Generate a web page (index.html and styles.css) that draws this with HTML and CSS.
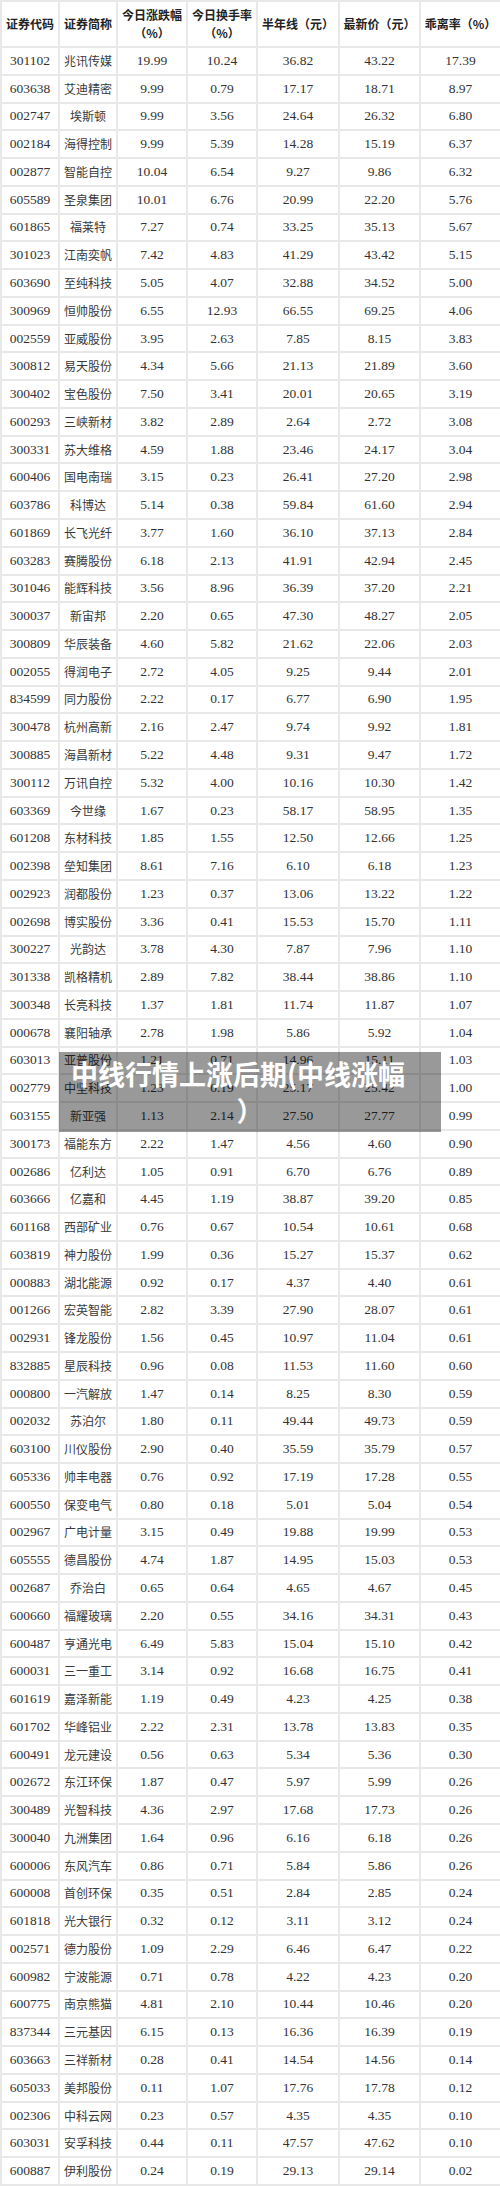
FILE: index.html
```html
<!DOCTYPE html>
<html lang="zh-CN">
<head>
<meta charset="utf-8">
<title>中线行情上涨后期</title>
<link rel="stylesheet" href="styles.css">
</head>
<body>
<div class="page">
<table class="stocks">
<colgroup>
<col class="c-code"><col class="c-name"><col class="c-chg"><col class="c-turn"><col class="c-ma"><col class="c-price"><col class="c-dev">
</colgroup>
<thead>
<tr>
<th>证券代码</th><th>证券简称</th><th>今日涨跌幅<br>（%）</th><th>今日换手率<br>（%）</th><th>半年线（元）</th><th>最新价（元）</th><th>乖离率（%）</th>
</tr>
</thead>
<tbody>
<tr><td>301102</td><td class="nm">兆讯传媒</td><td>19.99</td><td>10.24</td><td>36.82</td><td>43.22</td><td>17.39</td></tr>
<tr><td>603638</td><td class="nm">艾迪精密</td><td>9.99</td><td>0.79</td><td>17.17</td><td>18.71</td><td>8.97</td></tr>
<tr><td>002747</td><td class="nm">埃斯顿</td><td>9.99</td><td>3.56</td><td>24.64</td><td>26.32</td><td>6.80</td></tr>
<tr><td>002184</td><td class="nm">海得控制</td><td>9.99</td><td>5.39</td><td>14.28</td><td>15.19</td><td>6.37</td></tr>
<tr><td>002877</td><td class="nm">智能自控</td><td>10.04</td><td>6.54</td><td>9.27</td><td>9.86</td><td>6.32</td></tr>
<tr><td>605589</td><td class="nm">圣泉集团</td><td>10.01</td><td>6.76</td><td>20.99</td><td>22.20</td><td>5.76</td></tr>
<tr><td>601865</td><td class="nm">福莱特</td><td>7.27</td><td>0.74</td><td>33.25</td><td>35.13</td><td>5.67</td></tr>
<tr><td>301023</td><td class="nm">江南奕帆</td><td>7.42</td><td>4.83</td><td>41.29</td><td>43.42</td><td>5.15</td></tr>
<tr><td>603690</td><td class="nm">至纯科技</td><td>5.05</td><td>4.07</td><td>32.88</td><td>34.52</td><td>5.00</td></tr>
<tr><td>300969</td><td class="nm">恒帅股份</td><td>6.55</td><td>12.93</td><td>66.55</td><td>69.25</td><td>4.06</td></tr>
<tr><td>002559</td><td class="nm">亚威股份</td><td>3.95</td><td>2.63</td><td>7.85</td><td>8.15</td><td>3.83</td></tr>
<tr><td>300812</td><td class="nm">易天股份</td><td>4.34</td><td>5.66</td><td>21.13</td><td>21.89</td><td>3.60</td></tr>
<tr><td>300402</td><td class="nm">宝色股份</td><td>7.50</td><td>3.41</td><td>20.01</td><td>20.65</td><td>3.19</td></tr>
<tr><td>600293</td><td class="nm">三峡新材</td><td>3.82</td><td>2.89</td><td>2.64</td><td>2.72</td><td>3.08</td></tr>
<tr><td>300331</td><td class="nm">苏大维格</td><td>4.59</td><td>1.88</td><td>23.46</td><td>24.17</td><td>3.04</td></tr>
<tr><td>600406</td><td class="nm">国电南瑞</td><td>3.15</td><td>0.23</td><td>26.41</td><td>27.20</td><td>2.98</td></tr>
<tr><td>603786</td><td class="nm">科博达</td><td>5.14</td><td>0.38</td><td>59.84</td><td>61.60</td><td>2.94</td></tr>
<tr><td>601869</td><td class="nm">长飞光纤</td><td>3.77</td><td>1.60</td><td>36.10</td><td>37.13</td><td>2.84</td></tr>
<tr><td>603283</td><td class="nm">赛腾股份</td><td>6.18</td><td>2.13</td><td>41.91</td><td>42.94</td><td>2.45</td></tr>
<tr><td>301046</td><td class="nm">能辉科技</td><td>3.56</td><td>8.96</td><td>36.39</td><td>37.20</td><td>2.21</td></tr>
<tr><td>300037</td><td class="nm">新宙邦</td><td>2.20</td><td>0.65</td><td>47.30</td><td>48.27</td><td>2.05</td></tr>
<tr><td>300809</td><td class="nm">华辰装备</td><td>4.60</td><td>5.82</td><td>21.62</td><td>22.06</td><td>2.03</td></tr>
<tr><td>002055</td><td class="nm">得润电子</td><td>2.72</td><td>4.05</td><td>9.25</td><td>9.44</td><td>2.01</td></tr>
<tr><td>834599</td><td class="nm">同力股份</td><td>2.22</td><td>0.17</td><td>6.77</td><td>6.90</td><td>1.95</td></tr>
<tr><td>300478</td><td class="nm">杭州高新</td><td>2.16</td><td>2.47</td><td>9.74</td><td>9.92</td><td>1.81</td></tr>
<tr><td>300885</td><td class="nm">海昌新材</td><td>5.22</td><td>4.48</td><td>9.31</td><td>9.47</td><td>1.72</td></tr>
<tr><td>300112</td><td class="nm">万讯自控</td><td>5.32</td><td>4.00</td><td>10.16</td><td>10.30</td><td>1.42</td></tr>
<tr><td>603369</td><td class="nm">今世缘</td><td>1.67</td><td>0.23</td><td>58.17</td><td>58.95</td><td>1.35</td></tr>
<tr><td>601208</td><td class="nm">东材科技</td><td>1.85</td><td>1.55</td><td>12.50</td><td>12.66</td><td>1.25</td></tr>
<tr><td>002398</td><td class="nm">垒知集团</td><td>8.61</td><td>7.16</td><td>6.10</td><td>6.18</td><td>1.23</td></tr>
<tr><td>002923</td><td class="nm">润都股份</td><td>1.23</td><td>0.37</td><td>13.06</td><td>13.22</td><td>1.22</td></tr>
<tr><td>002698</td><td class="nm">博实股份</td><td>3.36</td><td>0.41</td><td>15.53</td><td>15.70</td><td>1.11</td></tr>
<tr><td>300227</td><td class="nm">光韵达</td><td>3.78</td><td>4.30</td><td>7.87</td><td>7.96</td><td>1.10</td></tr>
<tr><td>301338</td><td class="nm">凯格精机</td><td>2.89</td><td>7.82</td><td>38.44</td><td>38.86</td><td>1.10</td></tr>
<tr><td>300348</td><td class="nm">长亮科技</td><td>1.37</td><td>1.81</td><td>11.74</td><td>11.87</td><td>1.07</td></tr>
<tr><td>000678</td><td class="nm">襄阳轴承</td><td>2.78</td><td>1.98</td><td>5.86</td><td>5.92</td><td>1.04</td></tr>
<tr><td>603013</td><td class="nm">亚普股份</td><td>1.21</td><td>0.71</td><td>14.96</td><td>15.11</td><td>1.03</td></tr>
<tr><td>002779</td><td class="nm">中坚科技</td><td>1.23</td><td>0.19</td><td>25.17</td><td>25.42</td><td>1.00</td></tr>
<tr><td>603155</td><td class="nm">新亚强</td><td>1.13</td><td>2.14</td><td>27.50</td><td>27.77</td><td>0.99</td></tr>
<tr><td>300173</td><td class="nm">福能东方</td><td>2.22</td><td>1.47</td><td>4.56</td><td>4.60</td><td>0.90</td></tr>
<tr><td>002686</td><td class="nm">亿利达</td><td>1.05</td><td>0.91</td><td>6.70</td><td>6.76</td><td>0.89</td></tr>
<tr><td>603666</td><td class="nm">亿嘉和</td><td>4.45</td><td>1.19</td><td>38.87</td><td>39.20</td><td>0.85</td></tr>
<tr><td>601168</td><td class="nm">西部矿业</td><td>0.76</td><td>0.67</td><td>10.54</td><td>10.61</td><td>0.68</td></tr>
<tr><td>603819</td><td class="nm">神力股份</td><td>1.99</td><td>0.36</td><td>15.27</td><td>15.37</td><td>0.62</td></tr>
<tr><td>000883</td><td class="nm">湖北能源</td><td>0.92</td><td>0.17</td><td>4.37</td><td>4.40</td><td>0.61</td></tr>
<tr><td>001266</td><td class="nm">宏英智能</td><td>2.82</td><td>3.39</td><td>27.90</td><td>28.07</td><td>0.61</td></tr>
<tr><td>002931</td><td class="nm">锋龙股份</td><td>1.56</td><td>0.45</td><td>10.97</td><td>11.04</td><td>0.61</td></tr>
<tr><td>832885</td><td class="nm">星辰科技</td><td>0.96</td><td>0.08</td><td>11.53</td><td>11.60</td><td>0.60</td></tr>
<tr><td>000800</td><td class="nm">一汽解放</td><td>1.47</td><td>0.14</td><td>8.25</td><td>8.30</td><td>0.59</td></tr>
<tr><td>002032</td><td class="nm">苏泊尔</td><td>1.80</td><td>0.11</td><td>49.44</td><td>49.73</td><td>0.59</td></tr>
<tr><td>603100</td><td class="nm">川仪股份</td><td>2.90</td><td>0.40</td><td>35.59</td><td>35.79</td><td>0.57</td></tr>
<tr><td>605336</td><td class="nm">帅丰电器</td><td>0.76</td><td>0.92</td><td>17.19</td><td>17.28</td><td>0.55</td></tr>
<tr><td>600550</td><td class="nm">保变电气</td><td>0.80</td><td>0.18</td><td>5.01</td><td>5.04</td><td>0.54</td></tr>
<tr><td>002967</td><td class="nm">广电计量</td><td>3.15</td><td>0.49</td><td>19.88</td><td>19.99</td><td>0.53</td></tr>
<tr><td>605555</td><td class="nm">德昌股份</td><td>4.74</td><td>1.87</td><td>14.95</td><td>15.03</td><td>0.53</td></tr>
<tr><td>002687</td><td class="nm">乔治白</td><td>0.65</td><td>0.64</td><td>4.65</td><td>4.67</td><td>0.45</td></tr>
<tr><td>600660</td><td class="nm">福耀玻璃</td><td>2.20</td><td>0.55</td><td>34.16</td><td>34.31</td><td>0.43</td></tr>
<tr><td>600487</td><td class="nm">亨通光电</td><td>6.49</td><td>5.83</td><td>15.04</td><td>15.10</td><td>0.42</td></tr>
<tr><td>600031</td><td class="nm">三一重工</td><td>3.14</td><td>0.92</td><td>16.68</td><td>16.75</td><td>0.41</td></tr>
<tr><td>601619</td><td class="nm">嘉泽新能</td><td>1.19</td><td>0.49</td><td>4.23</td><td>4.25</td><td>0.38</td></tr>
<tr><td>601702</td><td class="nm">华峰铝业</td><td>2.22</td><td>2.31</td><td>13.78</td><td>13.83</td><td>0.35</td></tr>
<tr><td>600491</td><td class="nm">龙元建设</td><td>0.56</td><td>0.63</td><td>5.34</td><td>5.36</td><td>0.30</td></tr>
<tr><td>002672</td><td class="nm">东江环保</td><td>1.87</td><td>0.47</td><td>5.97</td><td>5.99</td><td>0.26</td></tr>
<tr><td>300489</td><td class="nm">光智科技</td><td>4.36</td><td>2.97</td><td>17.68</td><td>17.73</td><td>0.26</td></tr>
<tr><td>300040</td><td class="nm">九洲集团</td><td>1.64</td><td>0.96</td><td>6.16</td><td>6.18</td><td>0.26</td></tr>
<tr><td>600006</td><td class="nm">东风汽车</td><td>0.86</td><td>0.71</td><td>5.84</td><td>5.86</td><td>0.26</td></tr>
<tr><td>600008</td><td class="nm">首创环保</td><td>0.35</td><td>0.51</td><td>2.84</td><td>2.85</td><td>0.24</td></tr>
<tr><td>601818</td><td class="nm">光大银行</td><td>0.32</td><td>0.12</td><td>3.11</td><td>3.12</td><td>0.24</td></tr>
<tr><td>002571</td><td class="nm">德力股份</td><td>1.09</td><td>2.29</td><td>6.46</td><td>6.47</td><td>0.22</td></tr>
<tr><td>600982</td><td class="nm">宁波能源</td><td>0.71</td><td>0.78</td><td>4.22</td><td>4.23</td><td>0.20</td></tr>
<tr><td>600775</td><td class="nm">南京熊猫</td><td>4.81</td><td>2.10</td><td>10.44</td><td>10.46</td><td>0.20</td></tr>
<tr><td>837344</td><td class="nm">三元基因</td><td>6.15</td><td>0.13</td><td>16.36</td><td>16.39</td><td>0.19</td></tr>
<tr><td>603663</td><td class="nm">三祥新材</td><td>0.28</td><td>0.41</td><td>14.54</td><td>14.56</td><td>0.14</td></tr>
<tr><td>605033</td><td class="nm">美邦股份</td><td>0.11</td><td>1.07</td><td>17.76</td><td>17.78</td><td>0.12</td></tr>
<tr><td>002306</td><td class="nm">中科云网</td><td>0.23</td><td>0.57</td><td>4.35</td><td>4.35</td><td>0.10</td></tr>
<tr><td>603031</td><td class="nm">安孚科技</td><td>0.44</td><td>0.11</td><td>47.57</td><td>47.62</td><td>0.10</td></tr>
<tr><td>600887</td><td class="nm">伊利股份</td><td>0.24</td><td>0.19</td><td>29.13</td><td>29.14</td><td>0.02</td></tr>
</tbody>
</table>
<div class="overlay-title"><span class="line1">中线行情上涨后期(中线涨幅</span><span class="line2">）</span></div>
</div>
</body>
</html>
```

FILE: styles.css
```css
html, body {
  margin: 0;
  padding: 0;
  background: #ffffff;
}

.page {
  position: relative;
  width: 500px;
}

.stocks {
  width: 500px;
  table-layout: fixed;
  border-collapse: collapse;
  font-family: "Liberation Serif", "Noto Sans CJK SC", serif;
  font-size: 13.5px;
  color: #333333;
}

.c-code { width: 58px; }
.c-name { width: 58px; }
.c-chg { width: 70px; }
.c-turn { width: 70px; }
.c-ma { width: 82px; }
.c-price { width: 81px; }
.c-dev { width: 81px; }

.stocks th,
.stocks td {
  border: 2px solid #e8e8e8;
  padding: 0;
  text-align: center;
  vertical-align: middle;
  white-space: nowrap;
  overflow: hidden;
}

.stocks thead tr {
  height: 46px;
}

.stocks th {
  font-family: "Noto Sans CJK SC", "Liberation Serif", sans-serif;
  font-size: 12px;
  font-weight: 700;
  line-height: 18px;
  color: #222222;
}

.stocks tbody tr {
  height: 27.77px;
}

.stocks td {
  line-height: 16px;
}

.stocks td.nm {
  font-family: "Noto Sans CJK SC", sans-serif;
  font-size: 12px;
  color: #3a3a3a;
}

.overlay-title {
  position: absolute;
  left: 59px;
  top: 1052px;
  width: 382px;
  height: 80px;
  box-sizing: border-box;
  padding-top: 4px;
  background: rgba(0, 0, 0, 0.4);
  color: #ffffff;
  font-family: "Noto Sans CJK SC", sans-serif;
  font-size: 27px;
  font-weight: 700;
  line-height: 36px;
  text-align: center;
}

.overlay-title .line1,
.overlay-title .line2 {
  display: block;
}

.overlay-title .line1 {
  padding-right: 24px;
}
```
